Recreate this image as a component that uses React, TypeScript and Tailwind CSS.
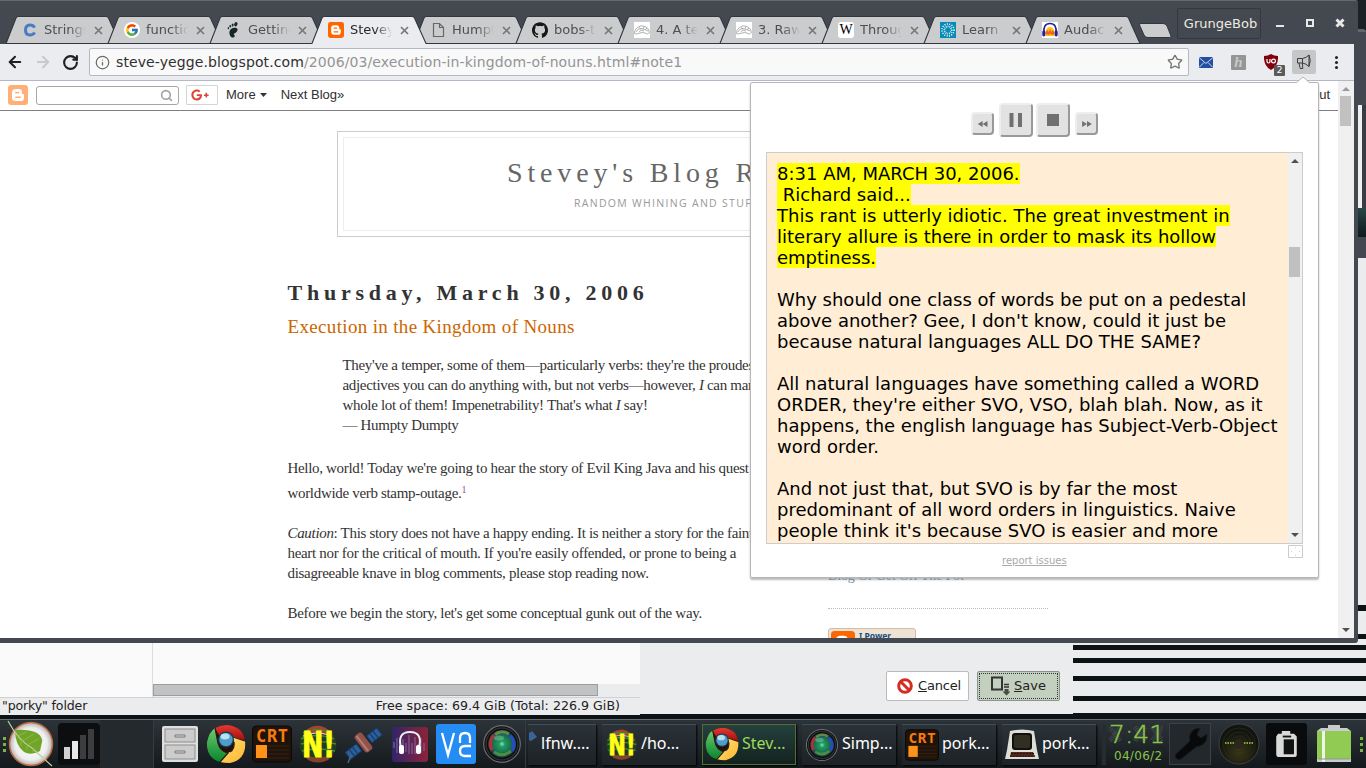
import React from 'react';
import { SiGithub } from 'react-icons/si';
import { FcGoogle } from 'react-icons/fc';
import { FaGooglePlusG } from 'react-icons/fa';
import { ArrowLeft, ArrowRight, RotateCw, Info, Star, Search } from 'lucide-react';

const sans = "font-['DejaVu_Sans',sans-serif]";
const serif = "font-['Liberation_Serif',serif]";

function BloggerMark({ className }: { className: string }) {
  return (
    <svg viewBox="0 0 20 20" className={className}>
      <rect width="20" height="20" rx="3" fill="currentColor" />
      <path d="M7.5 4h3.2a3.3 3.3 0 0 1 3.3 3.3v.9q0 .8.8.8h.4q.8 0 .8.9v2.5A3.6 3.6 0 0 1 12.4 16H7.5A3.5 3.5 0 0 1 4 12.5v-5A3.5 3.5 0 0 1 7.5 4z" fill="#fff" />
      <path d="M7.8 7.7h2.7M7.8 12.3h4.5" stroke="currentColor" strokeWidth="1.6" strokeLinecap="round" />
    </svg>
  );
}

function BrainIcon() {
  return (
    <svg viewBox="0 0 16 16" className="size-4">
      <rect width="16" height="16" fill="#fff" />
      <g fill="none" stroke="#8f8f8f" strokeWidth=".7">
        <path d="M.5 11.500Q0 8 3.500 5.500 7 2.500 11 4.500q4 1.500 4.500 6l-2 1.500-2.500-1q-3-1-5 0l-4 1z" />
        <path d="M2 10q2-4 5-3.500t7 2.500M5 9.500q2-2 5-.5M5.500 5.500l1.500 2M10 4.500L9 7M13 6l-2 2" />
      </g>
    </svg>
  );
}

function FootIcon() {
  return (
    <svg viewBox="0 0 16 16" className="size-4" fill="#18242b">
      <ellipse cx="9.800" cy="2.200" rx="1.600" ry="2.200" transform="rotate(20 9.800 2.200)" />
      <ellipse cx="6.600" cy="3" rx="1" ry="1.500" />
      <ellipse cx="4.200" cy="4.300" rx=".8" ry="1.300" />
      <ellipse cx="2.400" cy="6.200" rx=".7" ry="1.100" transform="rotate(-20 2.400 6.200)" />
      <path d="M10.500 6C8 5 4 6 3.500 9.500c-.6 3.500 1.500 6.500 3.800 6 1.800-.4 1.800-2 .8-2.800-.7-.6-.2-1.200.7-1.500C11.500 10 12.500 7 10.500 6z" />
    </svg>
  );
}

function HeadphoneFav() {
  return (
    <svg viewBox="0 0 16 16" className="size-4">
      <rect width="16" height="16" fill="#fff" />
      <path d="M3.500 14Q3 5 8 5t4.500 9z" fill="#ffc20c" />
      <path d="M3.500 10l2-2 1 2 1.500-3 1.500 3 1-2 2 2v2l-2 1-2-1-2 1-3-1z" fill="#f0642c" />
      <path d="M2 11Q1 1.500 8 1.500T14 11" fill="none" stroke="#22229b" strokeWidth="1.700" />
      <rect x=".3" y="8.500" width="3" height="6" rx="1.400" fill="#22229b" />
      <rect x="12.700" y="8.500" width="3" height="6" rx="1.400" fill="#22229b" />
    </svg>
  );
}

const tabs = [
  { title: 'Strings', icon: <svg viewBox="0 0 16 16" className="size-4"><path d="M12.700 5.500Q11 3 8 3 3.500 3 3.500 8T8 13q3 0 4.700-2.500" fill="none" stroke="#4a7ac4" strokeWidth="3" /></svg> },
  { title: 'functions', icon: <span className="grid size-4 place-items-center rounded-full bg-white"><FcGoogle className="size-[14px]" /></span> },
  { title: 'Getting', icon: <FootIcon /> },
  { title: 'Stevey', active: true, icon: <BloggerMark className="size-4 text-[#ff6600]" /> },
  { title: 'Humpty', icon: <svg viewBox="0 0 16 16" className="size-4"><path d="M3.500 1.500h6l4 4v9h-10zM9.500 1.500v4h4" fill="none" stroke="#666" strokeWidth="1.200" /></svg> },
  { title: 'bobs-te', icon: <SiGithub className="size-4 text-[#181616]" /> },
  { title: '4. A tex', icon: <BrainIcon /> },
  { title: '3. Raw', icon: <BrainIcon /> },
  { title: 'Through', icon: <span className={`grid size-4 place-items-center overflow-hidden rounded-[3px] bg-white text-[14px] leading-none text-black ${serif}`}>W</span> },
  { title: 'Learn |', icon: <svg viewBox="0 0 16 16" className="size-4"><rect width="16" height="16" fill="#078bb9" /><circle cx="8" cy="8" r="6" fill="none" stroke="#fff" strokeWidth="1.500" strokeDasharray="1 1.400" /><circle cx="8" cy="8" r="3.600" fill="none" stroke="#fff" strokeWidth="1.800" strokeDasharray=".8 1" /></svg> },
  { title: 'Audacity', icon: <HeadphoneFav /> },
];

function Tab({ title, icon, active }: { title: string; icon: React.ReactNode; active?: boolean }) {
  return (
    <div className={`relative flex h-7 w-[102px] shrink-0 items-center pl-4 ${active ? 'z-10' : ''}`}>
      <svg className="absolute left-0 top-0 overflow-visible" width="115" height="28" viewBox="0 0 115 28">
        <path d="M0 28L10 2Q11 .5 12.500 .5H100Q101.500 .5 102.500 2L114 28z" fill={active ? '#ebecef' : '#cbcccd'} />
        <path d="M0 27.500L10 2Q11 .5 12.500 .5H100Q101.500 .5 102.500 2L114 27.500" fill="none" stroke="#33373d" strokeWidth="1.100" />
        {!active && <path d="M0 27.500H114" stroke="#33373d" strokeWidth="1" />}
      </svg>
      <span className="relative">{icon}</span>
      <span className={`relative ml-[6px] w-[42px] overflow-hidden whitespace-nowrap text-[13px] leading-[18px] [mask-image:linear-gradient(90deg,#000_60%,transparent)] ${active ? 'text-[#28292b]' : 'text-[#4e4f51]'}`}>{title}</span>
      <svg viewBox="0 0 9 9" className="relative ml-2 size-[9px]"><path d="M1 1l7 7M8 1L1 8" stroke="#76787a" strokeWidth="1.700" /></svg>
    </div>
  );
}

function Arrow({ up, light }: { up?: boolean; light?: boolean }) {
  return (
    <svg viewBox="0 0 8 4" className="h-1 w-2"><path d={up ? 'M0 4L4 0l4 4z' : 'M0 0h8L4 4z'} fill={light ? '#9a9a9a' : '#505050'} /></svg>
  );
}

function Chrome() {
  return (
    <div className="absolute left-0 top-0 flex h-[643px] w-[1358px] flex-col overflow-hidden rounded-br-[3px] rounded-tr-[3px] border-t border-[#66696a] bg-[#444851]">
      <div className="flex h-[43px] shrink-0 items-end pl-[6px]">
        <div className="flex">{tabs.map((t) => <Tab key={t.title} {...t} />)}</div>
        <svg width="34" height="18" viewBox="0 0 34 18" className="mb-[4px] ml-[11px] mr-[4px]"><path d="M1 1.500h23q3 0 4 2.500l4 10q.5 1.500-1.500 1.500H9q-3 0-4-2.500L.5 3z" fill="#cbcccd" stroke="#33373d" /></svg>
        <div className="mb-[5px] flex h-[31px] w-[84px] items-center justify-center rounded-[2px] border border-[#34373d] pl-[3px] text-[13px] text-[#ecece0]">GrungeBob</div>
        <div className="ml-[15px] flex h-7 w-[69px] items-start justify-between">
          <span className="mt-[9px] h-[2px] w-2 bg-[#e8e8e8]" />
          <span className="mt-[3px] size-2 border-2 border-[#e8e8e8]" />
          <svg viewBox="0 0 10 10" className="mt-[2px] size-[10px]"><path d="M1.500 1.500l7 7M8.500 1.500l-7 7" stroke="#e8e8e8" strokeWidth="3" /></svg>
        </div>
      </div>
      <div className="flex h-[37px] w-[1354px] shrink-0 items-center border-b border-[#b4b8c6] bg-[#ebecef]">
        <ArrowLeft className="ml-[6px] size-[18px] text-[#202020]" strokeWidth={2.700} />
        <ArrowRight className="ml-[10px] size-[18px] text-[#c8c9cb]" strokeWidth={2.700} />
        <RotateCw className="ml-[10px] size-[17px] text-[#202020]" strokeWidth={3} />
        <div className="ml-[10px] flex h-[28px] w-[1100px] items-center rounded-[2px] border border-[#b4b8c3] bg-[#f9f9f9] px-[5px]">
          <Info className="size-[15px] text-[#6d6d6d]" strokeWidth={2} />
          <span className="ml-[6px] whitespace-nowrap text-[14px] tracking-[0.094px] text-[#939495]"><span className="text-[#303030]">steve-yegge.blogspot.com</span>/2006/03/execution-in-kingdom-of-nouns.html#note1</span>
          <Star className="ml-auto size-[16px] text-[#757575]" strokeWidth={2} />
        </div>
        <svg viewBox="0 0 14 11" className="ml-[10px] h-[11px] w-[14px]"><rect width="14" height="11" fill="#2450a4" /><path d="M0 .5l7 6 7-6M0 10.500l5-5M14 10.500l-5-5" fill="none" stroke="#dce4f4" strokeWidth=".9" /></svg>
        <div className={`ml-[18px] grid size-[15px] place-items-center rounded-[1px] bg-[#959595] text-[15px] font-bold italic leading-none text-[#c9c9c9] ${serif}`}>h</div>
        <div className="relative ml-[18px] h-4 w-[16px]">
          <svg viewBox="0 0 14 16" className="h-4 w-[14px]"><path d="M7 0q3 2 7 2Q14.500 12 7 16-.5 12 0 2 4 2 7 0z" fill="#80000b" /><path d="M3 5v2.500q0 1.500 1.500 1.500T6 7.500V5" fill="none" stroke="#fff" strokeWidth="1.200" /><circle cx="9.500" cy="7" r="1.900" fill="none" stroke="#fff" strokeWidth="1.200" /></svg>
          <span className="absolute left-[10px] top-[11px] grid h-[11px] w-[11px] place-items-center rounded-[1px] bg-[#5b5b5b] text-[9px] leading-none text-white">2</span>
        </div>
        <div className="ml-[12px] grid size-6 place-items-center rounded-[2px] bg-[#c5c6c8]">
          <svg viewBox="0 0 16 16" className="size-4" fill="none" stroke="#3d3d3d" strokeWidth="1"><path d="M1.500 4.500h5v4.500h-5zM6.500 4.500Q10 4 13 1v11.500Q10 9.500 6.500 9M3 9l1.200 5.500h2.600L6.300 9M13 1q2.500 5.500 0 11.500" /></svg>
        </div>
        <div className="ml-[19px] flex flex-col gap-[2px]"><i className="size-[3px] rounded-full bg-[#222]" /><i className="size-[3px] rounded-full bg-[#222]" /><i className="size-[3px] rounded-full bg-[#222]" /></div>
      </div>
      <div className="flex h-[557px] w-[1354px] shrink-0 bg-white">
        <Page />
        <div className="flex w-4 flex-col items-center bg-[#f0f0f0] pb-[6px] pr-px pt-[6px]">
          <Arrow up light />
          <div className="mt-[5px] h-[30px] w-[11px] bg-[#c1c1c1]" />
          <div className="grow" />
          <Arrow />
        </div>
      </div>
      <div className="h-px shrink-0" />
    </div>
  );
}

function Page() {
  return (
    <div className="flex h-full w-[1338px] flex-col overflow-hidden bg-white">
      <div className="flex h-[30px] shrink-0 items-center border-b border-[#808080] pb-px pl-2 font-['Liberation_Sans',sans-serif] text-[13px] text-[#303030]">
        <BloggerMark className="size-5 text-[#ffb079]" />
        <div className="ml-2 flex h-[19px] w-[143px] items-center justify-end rounded-[3px] border border-[#a7a7a7] pr-[5px]"><Search className="size-[13px] text-[#a2a2a2]" strokeWidth={3} /></div>
        <div className="ml-[7px] grid h-5 w-8 place-items-center rounded-[1px] border border-[#d5d5d5] pr-1"><FaGooglePlusG className="h-[16px] w-[18px] text-[#dc4437]" /></div>
        <span className="ml-[8px]">More</span>
        <svg viewBox="0 0 7 4" className="ml-1 h-1 w-[7px]"><path d="M0 0h7L3.500 4z" fill="#333" /></svg>
        <span className="ml-[14px]">Next Blog»</span>
        <span className="ml-auto mr-[8px]">Sign Out</span>
      </div>
      <div className="ml-[337px] mt-5 h-[106px] w-[660px] shrink-0 border border-[#ccc] p-[5px]">
        <div className="h-full border border-[#eee]">
          <h1 className={`ml-[163px] mt-[18px] whitespace-nowrap text-[28px] leading-[34px] tracking-[4.850px] text-[#666] ${serif}`}>Stevey's Blog Rants</h1>
          <p className="ml-[230px] mt-[6px] whitespace-nowrap font-['Open_Sans',sans-serif] text-[10.500px] leading-[14px] tracking-[1.300px] text-[#999]">RANDOM WHINING AND STUFF.</p>
        </div>
      </div>
      <div className="flex">
        <div className={`ml-[287px] w-[541px] shrink-0 whitespace-nowrap pl-[0.500px] text-[15px] leading-5 tracking-[-0.320px] text-[#333] ${serif}`}>
          <h2 className="mt-[42px] text-[22px] font-bold leading-7 tracking-[4.750px]">Thursday, March 30, 2006</h2>
          <h3 className="mt-[8px] text-[19px] leading-6 tracking-[0.340px] text-[#cc6600]">Execution in the Kingdom of Nouns</h3>
          <p className="ml-[55px] mt-[16px]">They've a temper, some of them—particularly verbs: they're the proudest—<br />adjectives you can do anything with, but not verbs—however, <i>I</i> can manage the<br />whole lot of them! Impenetrability! That's what <i>I</i> say!<br />— Humpty Dumpty</p>
          <p className="mt-[23px]">Hello, world! Today we're going to hear the story of Evil King Java and his quest for</p>
          <p className="mt-[5px]">worldwide verb stamp-outage.<sup className="text-[10px] leading-none text-[#a050a0]">1</sup></p>
          <p className="mt-5"><i>Caution</i>: This story does not have a happy ending. It is neither a story for the faint of<br />heart nor for the critical of mouth. If you're easily offended, or prone to being a<br />disagreeable knave in blog comments, please stop reading now.</p>
          <p className="mt-5">Before we begin the story, let's get some conceptual gunk out of the way.</p>
        </div>
        <div className="mt-[329px] w-[220px]">
          <p className={`whitespace-nowrap border-b border-dotted border-[#bbb] pb-[23px] text-[14px] leading-[19px] tracking-[-0.150px] text-[#5588aa] ${serif}`}>Blog Or Get Off The Pot</p>
          <div className="mt-[19px] flex h-[31px] w-[88px] rounded-[3px] border border-[#d0bfa8] bg-[#ede2d4] p-[2px] font-['Noto_Sans',sans-serif] text-[8.500px] font-bold leading-[9px] text-[#174f82]"><BloggerMark className="mr-1 size-6 text-[#ff6600]" />I Power</div>
        </div>
      </div>
    </div>
  );
}

function PlayerButton({ large, d }: { large?: boolean; d: string }) {
  return (
    <button className={`grid place-items-center rounded-[4px] border-2 border-b-[#999] border-l-[#eee] border-r-[#999] border-t-[#eee] bg-[#e2e2e2] ${large ? 'size-[34px]' : 'size-[23px]'}`}>
      <svg viewBox="0 0 16 16" className={large ? 'size-4' : 'size-3'}><path d={d} fill="#707070" /></svg>
    </button>
  );
}

function Popup() {
  return (
    <div className="absolute left-[750px] top-[82px] h-[496px] w-[569px] rounded-[2px] border border-[#b4b6ba] bg-white shadow-[0_2px_2px_#999a]">
      <svg className="absolute left-[545px] top-[-7px]" width="14" height="8"><path d="M0 7L7 1l7 6v1H0z" fill="#fff" /><path d="M0 7L7 1l7 6" fill="none" stroke="#b5b7ba" /></svg>
      <div className="ml-[220px] mt-[20px] flex h-[34px] items-end">
        <div className="mb-[2px]"><PlayerButton d="M7.500 4v8L1 8zM14 4v8L7.500 8z" /></div>
        <div className="ml-[5px]"><PlayerButton large d="M1.500 1h4v14h-4zM10 1h4v14h-4z" /></div>
        <div className="ml-[3px]"><PlayerButton large d="M2 2h12v12H2z" /></div>
        <div className="mb-[2px] ml-[5px]"><PlayerButton d="M1.500 4v8L8 8zM8 4v8l6.500-4z" /></div>
      </div>
      <div className="ml-[15px] mt-[15px] flex h-[392px] w-[537px] border border-[#ccc] bg-[#ffedd5]">
        <div className="w-[521px] overflow-hidden whitespace-nowrap pl-[10px] pt-[10px] text-[18px] leading-[21px] text-black">
          <p className="[&>span]:bg-[#ffff00]"><span>8:31 AM, MARCH 30, 2006.</span><br /><span>&nbsp;Richard said...</span><br /><span>This rant is utterly idiotic. The great investment in</span><br /><span>literary allure is there in order to mask its hollow</span><br /><span>emptiness.</span></p>
          <p className="mt-[21px]">Why should one class of words be put on a pedestal<br />above another? Gee, I don't know, could it just be<br />because natural languages ALL DO THE SAME?</p>
          <p className="mt-[21px]">All natural languages have something called a WORD<br />ORDER, they're either SVO, VSO, blah blah. Now, as it<br />happens, the english language has Subject-Verb-Object<br />word order.</p>
          <p className="mt-[21px]">And not just that, but SVO is by far the most<br />predominant of all word orders in linguistics. Naive<br />people think it's because SVO is easier and more</p>
        </div>
        <div className="flex w-[14px] flex-col items-center bg-[#f0f0f0] pb-[6px] pr-px pt-[6px]"><Arrow up /><div className="mt-[84px] h-[30px] w-[11px] bg-[#c0c0c0]" /><div className="grow" /><Arrow /></div>
      </div>
      <div className="flex pl-[251px] pt-[1px]">
        <a className="mt-[9px] w-[66px] whitespace-nowrap text-[10px] leading-[14px] text-[#aaa] underline">report issues</a>
        <svg viewBox="0 0 15 13" className="ml-[220px] h-[13px] w-[15px]"><path d="M.5 .5h14v12H.5z" fill="#fff" stroke="#ccc" /><path d="M7 3h1M7 10h1M3 6.500h1M11 6.500h1" stroke="#ccc" fill="none" /></svg>
      </div>
    </div>
  );
}

function Behind() {
  return (
    <div className="absolute left-0 top-[640px] flex h-[79px] w-full items-start bg-[#0d1314] pt-[3px]">
      <div className="flex h-[72px] w-[640px] flex-col bg-[#ebecee] text-[#222]">
        <div className="flex h-[54px] w-full bg-[#fafafa]">
          <div className="w-[153px] border-r border-[#ddd]" />
          <div className="flex grow flex-col justify-end"><div className="h-[13px] bg-[#ebecee]"><div className="h-[12px] w-[445px] border border-[#9c9da0] bg-[#c1c2c4]" /></div></div>
        </div>
        <div className="flex h-[18px] items-center border-t border-[#d0d0d5] pl-[2px] text-[12.600px]"><span className="tracking-[-0.150px]">"porky" folder</span><span className="ml-auto mr-[20px] tracking-[0.025px]">Free space: 69.4 GiB (Total: 226.9 GiB)</span></div>
      </div>
      <div className="flex h-[71px] w-[433px] bg-[#ebecee] pl-[246px] pt-[28px] text-[13px] text-[#222]">
        <div className="flex h-[30px] w-[83px] items-center rounded-[2px] border border-[#bbb] bg-white pl-[10px]">
          <svg viewBox="0 0 16 16" className="mr-[5px] size-4"><circle cx="8" cy="8" r="6.300" fill="#fff" stroke="#d52b22" strokeWidth="3" /><path d="M3.500 3.500l9 9" stroke="#d52b22" strokeWidth="3" /></svg>
          <span className="tracking-[-0.200px]"><u>C</u>ancel</span>
        </div>
        <div className="ml-2 flex h-[30px] w-[83px] rounded-[2px] border border-[#8a958a] bg-[#c4d0bf] p-px">
          <div className="flex grow items-center border border-dotted border-[#333] pl-[10px]">
            <svg viewBox="0 0 20 20" className="mr-1 size-[20px]"><path d="M2 1.500h10v12H2z" fill="none" stroke="#333" strokeWidth="2" /><path d="M14 8.500h5M14 11h5" stroke="#333" strokeWidth="1.300" /><path d="M14.500 13h4v2.500h2l-4 4-4-4h2z" fill="#4a4a4a" /></svg>
            <span><u>S</u>ave</span>
          </div>
        </div>
      </div>
      <div className="flex w-[293px] flex-col">
        <i className="h-[2px] bg-[#ebecee]" /><i className="mt-[5px] h-[8px] bg-[#ebecee]" /><i className="mt-[5px] h-[13px] bg-[#ebecee]" /><i className="mt-[5px] h-[15px] bg-[#ebecee]" /><i className="mt-[5px] h-[12px] bg-[#ebecee]" />
      </div>
    </div>
  );
}

function RightEdge() {
  return (
    <div className="absolute right-0 top-0 flex h-[643px] w-[12px] flex-col bg-[#0d1314] [&>i]:shrink-0">
      <i className="h-[29px] bg-[#1b2124]" /><i className="h-[3px] rounded-t bg-[#62656b]" /><i className="h-[73px] bg-[#444851]" />
      <i className="flex h-[103px] border-r-4 border-[#383c44] bg-[#f0f0f1]" />
      <i className="h-[29px] bg-linear-to-b from-[#294746] to-[#101a1b]" /><i className="h-[21px] bg-[#444851]" /><i className="h-[347px] bg-[#ebecee]" /><i className="mt-[6px] h-[23px] bg-[#ebecee]" /><i className="mt-[5px] h-1 bg-[#ebecee]" />
    </div>
  );
}

const ChromeIcon = ({ className }: { className: string }) => (
  <svg viewBox="0 0 40 40" className={className}>
    <defs><linearGradient id="yg" x2="1" y2="1"><stop stopColor="#ffe77a" /><stop offset="1" stopColor="#ffb22e" /></linearGradient><linearGradient id="gg" x2="0" y2="1"><stop stopColor="#6ecb70" /><stop offset="1" stopColor="#07852c" /></linearGradient><linearGradient id="rg" x2="0" y2="1"><stop stopColor="#e63a33" /><stop offset="1" stopColor="#a30a0a" /></linearGradient></defs>
    <circle cx="20" cy="20" r="19" fill="#241208" />
    <path d="M9 4Q22-3 34 6q4 4 5 11L21 11q-5 0-7 2z" fill="url(#rg)" />
    <path d="M9 4L12 19q2 8 10 10l-8 9Q0 34 1 18 3 8 9 4z" fill="url(#gg)" />
    <path d="M39 17Q41 35 24 39q-6 0-10-1l8-9q7-3 6-12l-2-5z" fill="url(#yg)" />
    <path d="M39 17L21 11q-7 0-9 8M9 4l3 15q2 8 10 10l-8 9M24 28q5-3 4-10" fill="none" stroke="#291711" strokeWidth="1.200" />
    <circle cx="20" cy="15.500" r="8" fill="#183750" /><circle cx="20" cy="15.500" r="6.700" fill="#4e9dcb" /><ellipse cx="19" cy="12.500" rx="4.500" ry="3" fill="#b9e1ed" />
  </svg>
);

const CrtIcon = ({ className }: { className: string }) => (
  <svg viewBox="0 0 40 40" className={className}>
    <rect x=".5" y="2" width="39" height="36" rx="4" fill="#20130a" stroke="#080808" />
    <path d="M3 22h34M3 26h34M3 30h34M3 34h34" stroke="#352211" />
    <text x="4" y="18" fontSize="17" fontWeight="bold" textLength="32" fill="#f77b10" fontFamily="DejaVu Sans Mono, monospace">CRT</text>
    <path d="M4 21h11v13H4z" fill="#ff9219" />
  </svg>
);

const NIcon = ({ className }: { className: string }) => (
  <svg viewBox="0 0 40 40" className={className}>
    <circle cx="20" cy="20" r="18.500" fill="#243b22" />
    <path d="M8 6q12-9 24 1l3 7Q20 5 4 14z" fill="#aa3f32" /><path d="M3 15q15-7 33 0M5 9q14-7 28 0M3 20q17-5 35 0M4 27q16-4 33 0" fill="none" stroke="#3f8a2e" strokeWidth="1.600" /><path d="M5 30q16 7 30 0l-5 6q-10 5-20 0z" fill="#834229" />
    <path d="M5 12q14-6 28 0" stroke="#d2d3ed" fill="none" />
    <text x="4" y="33" fontSize="35" fontWeight="bold" textLength="33" lengthAdjust="spacingAndGlyphs" fill="#ffff18" stroke="#ffff18" strokeWidth="1" fontFamily="DejaVu Sans, sans-serif">N!</text>
  </svg>
);

const LensIcon = ({ className }: { className: string }) => (
  <svg viewBox="0 0 40 40" className={className}>
    <defs><radialGradient id="lens"><stop stopColor="#7df0b0" /><stop offset=".2" stopColor="#249a68" /><stop offset=".6" stopColor="#17764c" /><stop offset=".85" stopColor="#1f4a62" /><stop offset="1" stopColor="#15212a" /></radialGradient></defs>
    <circle cx="20" cy="20" r="18.300" fill="#0d0e0f" stroke="#6c7072" strokeWidth="1.200" /><circle cx="20" cy="20" r="16" fill="none" stroke="#2c2f31" strokeWidth="1.500" /><circle cx="20" cy="20" r="14" fill="url(#lens)" />
    <path d="M10 26A12 12 0 0 1 12 11" fill="none" stroke="#c9302a" strokeWidth="3.500" opacity=".8" /><path d="M13 10.500A11.500 11.500 0 0 1 27 10" fill="none" stroke="#79a044" strokeWidth="3" opacity=".75" /><path d="M28 11.500A11.500 11.500 0 0 1 30 27" fill="none" stroke="#2850d0" strokeWidth="3.500" opacity=".8" /><path d="M12 28q8 6 17-1" fill="none" stroke="#60a737" strokeWidth="3" opacity=".7" />
    <ellipse cx="17" cy="14" rx="5" ry="2.500" fill="#a5e9c0" opacity=".35" />
  </svg>
);

const SatIcon = ({ className }: { className: string }) => (
  <svg viewBox="0 0 40 40" className={className}>
    <g transform="rotate(-38 20 20)"><path d="M0 15h14v9H0zM27 15h13v9H27z" fill="#2b5f9c" stroke="#17385d" /><path d="M5 15v9M9 15v9M31 15v9M35 15v9" stroke="#15375e" /><rect x="16" y="8" width="9" height="21" rx="3" fill="#93534d" /><path d="M19 9v19" stroke="#b97a72" strokeWidth="2" /></g><path d="M7 31l-3 8" stroke="#456780" strokeWidth="1.500" />
  </svg>
);

function Task({ icon, label, active, partial }: { icon: React.ReactNode; label: string; active?: boolean; partial?: boolean }) {
  return <div className={`flex h-[41px] shrink-0 items-center border-t shadow-[1px_1px_2px_#000] ${partial ? 'w-[68px] pl-px' : 'w-[94px]'} ${active ? 'border border-[#536e32] bg-linear-to-b from-[#24413e] to-[#14221f] text-[#9dda5c] shadow-[0_0_4px_#74a735]' : 'border-[#3d5059] bg-linear-to-b from-[#2b3238] to-[#1c2226] text-white'}`}>{icon}<span className="-mt-[3px] ml-[3px] whitespace-nowrap font-['Noto_Sans',sans-serif] text-[16px]">{label}</span></div>;
}

const Dots = () => <div className="flex w-2 flex-col items-center gap-[3px]"><i className="size-[3px] bg-[#7bb640]" /><i className="size-[3px] bg-[#7bb640]" /><i className="size-[3px] bg-[#7bb640]" /></div>;

const digitShade = 'M1 6l10 14M11 6L1 20M26 6l10 14M36 6L26 20M43 6l11 14M54 6L43 20';

function Taskbar() {
  return (
    <div className="absolute left-0 top-[719px] flex h-[49px] w-full items-center overflow-hidden border-t border-[#687075] bg-linear-to-b from-[#2d3439] to-[#14191c]">
      <Dots />
      <svg viewBox="0 0 48 48" className="-ml-[1px] size-12 shrink-0">
        <defs><radialGradient id="orb"><stop stopColor="#fff" /><stop offset=".75" stopColor="#eee" /><stop offset="1" stopColor="#b5b0ad" /></radialGradient></defs>
        <circle cx="24" cy="24" r="21.500" fill="url(#orb)" stroke="#ba6940" strokeWidth="1.500" /><path d="M8 10q13-1 22 3 6 4 5 9l-2 9q-9 5-16 1Q8 25 8 10z" fill="#70a527" /><path d="M1 1q10 19 24 27l20 18" fill="none" stroke="#c0cda0" strokeWidth="1.200" /><path d="M11 16l8-4M15 21l12-7M20 25l12-6M14 20v6M20 26v4M26 29v3" stroke="#8cb843" />
      </svg>
      <div className="ml-[3px] flex h-[42px] w-[42px] shrink-0 items-end gap-[2px] rounded-[4px] bg-[#0c0e10] pb-[6px] pl-[6px]"><i className="h-3 w-[6px] bg-[#d2d2d2]" /><i className="h-[18px] w-[6px] bg-[#e8e8e8]" /><i className="h-6 w-[6px] bg-[#3b3d3e]" /><i className="h-[30px] w-[6px] bg-[#3b3d3e]" /></div>
      <div className="h-full w-[53px] shrink-0 bg-[#23292d]" />
      <div className="flex h-full w-[373px] shrink-0 items-center gap-[6px] border-l border-r border-[#353c40] pl-[6px]">
        <svg viewBox="0 0 40 40" className="size-10"><rect x="2" y="2" width="36" height="36" rx="2" fill="#dfdfdf" /><g fill="#ccc" stroke="#8e8e8e"><rect x="5" y="5" width="30" height="13" /><rect x="5" y="21" width="30" height="14" /></g><path d="M15 11h10v2H15zM15 27h10v2H15z" fill="#ddd" stroke="#777" /></svg>
        <ChromeIcon className="size-10" /><CrtIcon className="size-10" /><NIcon className="size-10" /><SatIcon className="size-10" />
        <svg viewBox="0 0 40 40" className="size-10"><defs><linearGradient id="aud"><stop stopColor="#30256a" /><stop offset="1" stopColor="#8c2339" /></linearGradient></defs><rect x="2" y="3" width="36" height="35" rx="3" fill="url(#aud)" /><path d="M4 18v6M7 14v15M10 20v9M13 15v15M16 19v9M19 11v19M22 19v11M25 13v17M28 20v9M31 14v15M34 19v8" stroke="#8a68a0" /><path d="M11 24Q7 8 20 8t9 16" fill="none" stroke="#eee" strokeWidth="2" /><rect x="9" y="21" width="5" height="9" rx="2" fill="#fff" /><rect x="26" y="21" width="5" height="9" rx="2" fill="#fff" /></svg>
        <svg viewBox="0 0 40 40" className="size-10"><rect width="40" height="40" rx="3" fill="#258cf3" /><path d="M6 9l6 22 6-22M24 19v-5q0-5 5-5t5 5v5M35 22h-6q-5 0-5 5t5 5h6" fill="none" stroke="#fff" strokeWidth="2.300" /></svg>
        <LensIcon className="size-10" />
      </div>
      <div className="ml-[2px] flex gap-[6px]">
        <Task partial label="lfnw...." icon={<svg viewBox="0 0 9 34" className="h-[34px] w-[9px]"><path d="M0 5l3-2 5 6-6 4-2-1z" fill="#376596" /></svg>} />
        <Task label="/ho..." icon={<NIcon className="ml-[3px] size-[33px]" />} />
        <Task active label="Stev..." icon={<ChromeIcon className="ml-[2px] size-[34px]" />} />
        <Task label="Simp..." icon={<LensIcon className="ml-[3px] size-[34px]" />} />
        <Task label="pork..." icon={<CrtIcon className="ml-[3px] size-[34px]" />} />
        <Task label="pork..." icon={<svg viewBox="0 0 34 34" className="ml-[3px] size-[34px]"><path d="M5 3q12-3 24 0l3 19 2 9H0l2-9z" fill="#ddded5" /><rect x="7" y="5" width="20" height="17" rx="3" fill="#111" /><rect x="9" y="7" width="16" height="13" rx="2" fill="#302f21" /><path d="M6 24h22l2 5H5z" fill="#53291d" /><path d="M6 25.500h23M5 28h25" stroke="#24140f" strokeDasharray="2 1" /></svg>} />
      </div>
      <div className="ml-[6px] h-[41px] w-1 shrink-0 bg-[#252d31]" />
      <div className={`ml-[3px] h-[45px] w-[54px] shrink-0 overflow-hidden whitespace-nowrap text-[#8cc449] ${sans}`}>
        <div className="relative -mt-px h-[27px] text-[25px] leading-[27px]">
          <svg className="absolute left-0 top-0" width="55" height="26"><path d={digitShade} stroke="#40484a" strokeWidth="5" strokeDasharray="1 1" /></svg>
          <span className="relative flex justify-between pr-px font-['DejaVu_Sans_Light','DejaVu_Sans',sans-serif] font-extralight [-webkit-text-stroke:0.500px_#8cc449]"><span>7</span><span>:</span><span>4</span><span>1</span></span>
        </div>
        <div className="pl-[5px] text-[12px] leading-[16px] tracking-[0.300px]">04/06/20</div>
      </div>
      <div className="ml-[6px] grid h-[42px] w-[42px] shrink-0 place-items-center border border-[#384247] bg-[#22282c]"><svg viewBox="0 0 36 36" className="size-9"><path d="M3 29L18 15q-2-8 5-12l5-1-3 7 4 3 6-4q1 11-11 13L9 33q-5 2-6-4z" fill="#07090a" stroke="#171b1d" /></svg></div>
      <svg viewBox="0 0 42 42" className="ml-[7px] size-[42px] shrink-0"><defs><radialGradient id="cone" cy=".7"><stop stopColor="#3a3817" /><stop offset="1" stopColor="#12140f" /></radialGradient></defs><circle cx="21" cy="21" r="20" fill="url(#cone)" stroke="#3b4042" /><g fill="none" stroke="#2c2b18" strokeWidth=".7"><circle cx="21" cy="21" r="16" /><circle cx="21" cy="21" r="12" /><circle cx="21" cy="21" r="8" /></g><circle cx="21" cy="21" r="5" fill="#2a271d" /><path d="M7 20h9M26 20h9" stroke="#81a83c" strokeWidth="2" strokeDasharray="1.500 1" /></svg>
      <div className="ml-[6px] grid h-[42px] w-[41px] shrink-0 place-items-center rounded-[3px] bg-[#090b0c]"><svg viewBox="0 0 24 30" className="h-[28px] w-[23px]"><path d="M3 4h4V1h9v3h4l3 3v20q0 2-3 2H4q-3 0-3-3V7z" fill="#d9dbdb" /><rect x="9" y="10" width="11" height="16" fill="#111" /><path d="M8 7h9" stroke="#111" strokeWidth="2" /></svg></div>
      <svg viewBox="0 0 36 40" className="ml-[9px] h-10 w-9 shrink-0"><path d="M1 7h34v29H1z" fill="#92cb53" /><path d="M1 7l4-3h7V1h12v3h7l4 3zM1 35h34v3H1z" fill="#c9cccc" /><path d="M6 7h3v31H6z" fill="#eef6e5" /><path d="M2 35h32" stroke="#8f9690" /></svg>
      <div className="ml-[5px]"><Dots /></div>
    </div>
  );
}

export default function App() {
  return <div className={`relative h-[768px] w-[1366px] overflow-hidden bg-[#ebecee] ${sans}`}><Behind /><RightEdge /><Chrome /><Popup /><Taskbar /></div>;
}
